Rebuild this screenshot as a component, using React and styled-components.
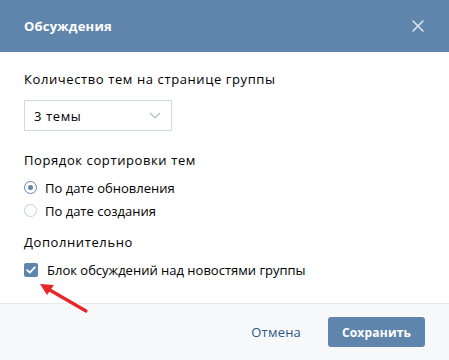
import React from 'react';
import styled, { createGlobalStyle } from 'styled-components';

const GlobalStyle = createGlobalStyle`
  html, body {
    margin: 0;
    padding: 0;
    background: #ffffff;
  }
  body {
    font-family: "Open Sans", "Liberation Sans", sans-serif;
    -webkit-font-smoothing: antialiased;
  }
`;

const Modal = styled.div`
  position: relative;
  width: 449px;
  height: 360px;
  display: flex;
  flex-direction: column;
  background: #ffffff;
  overflow: hidden;
`;

const Header = styled.div`
  height: 52px;
  flex-shrink: 0;
  background: #5f85ad;
  display: flex;
  align-items: center;
  justify-content: space-between;
  padding: 0 24px;
  box-sizing: border-box;
`;

const Title = styled.div`
  color: #ffffff;
  font-size: 13px;
  font-weight: 700;
  letter-spacing: 0.2px;
`;

const CloseButton = styled.button`
  width: 20px;
  height: 20px;
  border: 0;
  padding: 0;
  background: none;
  display: flex;
  align-items: center;
  justify-content: center;
  margin-right: -3px;
  cursor: pointer;
`;

const Body = styled.div`
  flex: 1;
  padding: 18px 24px 0;
  display: flex;
  flex-direction: column;
`;

const Label = styled.div`
  font-size: 13px;
  letter-spacing: 0.6px;
  color: #000000;
  line-height: 18px;
  margin-bottom: ${p => p.$gap}px;
`;

const Select = styled.div`
  width: 148px;
  height: 31px;
  box-sizing: border-box;
  border: 1px solid #d3d9de;
  display: flex;
  align-items: center;
  justify-content: space-between;
  padding: 0 10px 0 9px;
  font-size: 13px;
  letter-spacing: 0.6px;
  color: #000000;
  margin-bottom: 20px;
`;

const OptionRow = styled.div`
  display: flex;
  align-items: center;
  gap: 8px;
  height: 23px;
  font-size: 13px;
  color: #000000;
`;

const Radio = styled.span`
  width: 13px;
  height: 13px;
  box-sizing: border-box;
  border-radius: 50%;
  border: 1px solid ${p => (p.$checked ? '#5f85ad' : '#c5ced8')};
  display: flex;
  align-items: center;
  justify-content: center;
  &::after {
    content: '';
    width: 5px;
    height: 5px;
    border-radius: 50%;
    background: #5f85ad;
    display: ${p => (p.$checked ? 'block' : 'none')};
  }
`;

const RadioGroup = styled.div`
  display: flex;
  flex-direction: column;
  margin-bottom: 11px;
`;

const Checkbox = styled.span`
  width: 14px;
  height: 14px;
  border-radius: 2px;
  background: #5f85ad;
  display: flex;
  align-items: center;
  justify-content: center;
`;

const CheckRow = styled(OptionRow)`
  gap: 9px;
`;

const Footer = styled.div`
  height: 57px;
  flex-shrink: 0;
  background: #f7f8fa;
  border-top: 1px solid #e7e8ec;
  box-sizing: border-box;
  display: flex;
  align-items: center;
  justify-content: flex-end;
  padding: 0 24px 0 0;
  gap: 27px;
`;

const LinkButton = styled.button`
  border: 0;
  background: none;
  font-family: inherit;
  font-size: 13px;
  letter-spacing: 0.2px;
  color: #2a5885;
  padding: 0;
  cursor: pointer;
`;

const PrimaryButton = styled.button`
  width: 97px;
  height: 30px;
  border: 0;
  border-radius: 3px;
  background: #5f85ad;
  color: #ffffff;
  font-family: inherit;
  font-size: 12px;
  font-weight: 700;
  letter-spacing: 0.2px;
  cursor: pointer;
`;

const Arrow = styled.svg`
  position: absolute;
  left: 36px;
  top: 280px;
`;

export default function App() {
  return (
    <>
      <GlobalStyle />
      <Modal>
        <Header>
          <Title>Обсуждения</Title>
          <CloseButton>
            <svg width="12" height="12" viewBox="0 0 12 12">
              <path d="M1 1L11 11M11 1L1 11" stroke="#dbe4ee" strokeWidth="1.6" strokeLinecap="round" />
            </svg>
          </CloseButton>
        </Header>
        <Body>
          <Label $gap={12}>Количество тем на странице группы</Label>
          <Select>
            <span>3 темы</span>
            <svg width="12" height="7" viewBox="0 0 12 7">
              <path d="M1 1L6 6L11 1" fill="none" stroke="#a8b8c8" strokeWidth="1.1" />
            </svg>
          </Select>
          <Label $gap={7}>Порядок сортировки тем</Label>
          <RadioGroup>
            <OptionRow>
              <Radio $checked />
              <span>По дате обновления</span>
            </OptionRow>
            <OptionRow>
              <Radio />
              <span>По дате создания</span>
            </OptionRow>
          </RadioGroup>
          <Label $gap={7}>Дополнительно</Label>
          <CheckRow>
            <Checkbox>
              <svg width="10" height="8" viewBox="0 0 10 8">
                <path d="M1.2 4.2L3.8 6.6L8.8 1.4" fill="none" stroke="#ffffff" strokeWidth="1.8" strokeLinecap="round" strokeLinejoin="round" />
              </svg>
            </Checkbox>
            <span>Блок обсуждений над новостями группы</span>
          </CheckRow>
        </Body>
        <Footer>
          <LinkButton>Отмена</LinkButton>
          <PrimaryButton>Сохранить</PrimaryButton>
        </Footer>
        <Arrow width="56" height="36" viewBox="0 0 56 36">
          <path d="M50 31L12 9" stroke="#e8262a" strokeWidth="3.2" strokeLinecap="round" />
          <path d="M4 4L18 5L11 15Z" fill="#e8262a" />
        </Arrow>
      </Modal>
    </>
  );
}
